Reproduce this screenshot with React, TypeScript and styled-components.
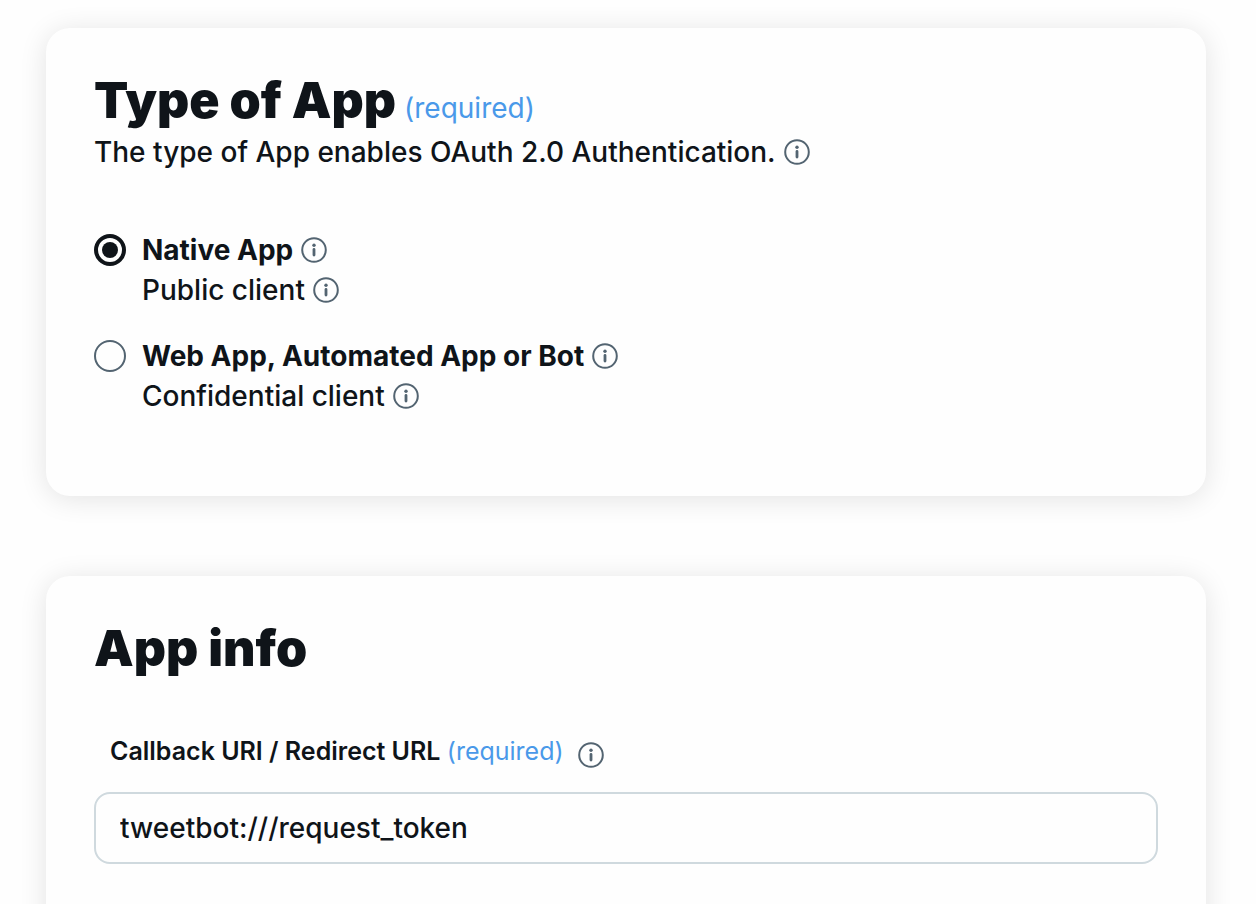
import React, { useState } from "react";
import styled, { createGlobalStyle } from "styled-components";

const ink = "#0f1419";
const slate = "#536471";
const blue = "#4a99e9";

const GlobalStyle = createGlobalStyle`
  *, *::before, *::after { box-sizing: border-box; }
  html { background: #fefefe; }
  body {
    margin: 0;
    color: ${ink};
    font-family: Inter, "Liberation Sans", sans-serif;
    font-size: 28px;
    font-weight: 500;
    line-height: 40px;
  }
`;

const Page = styled.main`
  display: flex;
  flex-direction: column;
  gap: 80px;
  padding: 28px 50px 48px 46px;
`;

const Card = styled.section`
  padding: 48px 48px 80px;
  border-radius: 24px;
  background: #fefefe;
  box-shadow: 0 3px 28px rgba(0, 0, 0, 0.11);
`;

const Title = styled.h1`
  margin: 0 0 8px;
  font-size: 50px;
  font-weight: 900;
  line-height: 48px;
`;

const Required = styled.span<{ $size: number }>`
  color: ${blue};
  font-size: ${(p) => p.$size}px;
  font-weight: 400;
  line-height: 24px;
`;

const Line = styled.div`
  display: flex;
  align-items: center;
  gap: 8px;
`;

const Options = styled.div`
  display: flex;
  flex-direction: column;
  gap: 26px;
  margin-top: 58px;
`;

const Option = styled.div`
  display: flex;
  align-items: flex-start;
  gap: 16px;
`;

const OptionName = styled.label`
  font-weight: 700;
`;

const Radio = styled.input`
  appearance: none;
  display: grid;
  place-content: center;
  flex: none;
  width: 32px;
  height: 32px;
  margin: 4px 0;
  border: 2px solid ${slate};
  border-radius: 50%;

  &:checked {
    border: 4px solid ${ink};
  }

  &:checked::after {
    content: "";
    width: 16px;
    height: 16px;
    border-radius: 50%;
    background: ${ink};
  }
`;

const IconButton = styled.button`
  display: flex;
  padding: 0;
  border: 0;
  background: none;
  color: ${slate};
  cursor: pointer;
`;

const FieldHead = styled.div`
  display: flex;
  align-items: flex-end;
  gap: 14px;
  margin: 62px 16px 24px;
`;

const FieldLabel = styled.label`
  font-size: 25px;
  font-weight: 600;
  line-height: 34px;
`;

const TextField = styled.input`
  display: block;
  width: 100%;
  height: 72px;
  padding: 0 24px;
  border: 2px solid #cfd9de;
  border-radius: 16px;
  background: transparent;
  color: ${ink};
  font: inherit;
`;

function Info({ label }: { label: string }) {
  return (
    <IconButton type="button" aria-label={label}>
      <svg width="26" height="26" viewBox="0 0 26 26" fill="none" aria-hidden="true">
        <circle cx="13" cy="13" r="11.8" stroke="currentColor" strokeWidth="2" />
        <circle cx="13" cy="8.3" r="1.7" fill="currentColor" />
        <path d="M13 12.4v5.6" stroke="currentColor" strokeWidth="2.8" strokeLinecap="round" />
      </svg>
    </IconButton>
  );
}

const appTypes = [
  { id: "native", name: "Native App", client: "Public client" },
  { id: "web", name: "Web App, Automated App or Bot", client: "Confidential client" },
];

export default function App() {
  const [type, setType] = useState("native");
  const [callback, setCallback] = useState("tweetbot:///request_token");

  return (
    <>
      <GlobalStyle />
      <Page>
        <Card>
          <Title>
            Type of App<Required $size={28}> (required)</Required>
          </Title>
          <Line>
            <span>The type of App enables OAuth 2.0 Authentication.</span>
            <Info label="About app types" />
          </Line>
          <Options role="radiogroup" aria-label="Type of App">
            {appTypes.map((t) => (
              <Option key={t.id}>
                <Radio
                  type="radio"
                  name="app-type"
                  id={t.id}
                  checked={type === t.id}
                  onChange={() => setType(t.id)}
                />
                <div>
                  <Line>
                    <OptionName htmlFor={t.id}>{t.name}</OptionName>
                    <Info label={`About ${t.name}`} />
                  </Line>
                  <Line>
                    <span>{t.client}</span>
                    <Info label={`About ${t.client}`} />
                  </Line>
                </div>
              </Option>
            ))}
          </Options>
        </Card>
        <Card>
          <Title as="h2">App info</Title>
          <FieldHead>
            <FieldLabel htmlFor="callback">
              Callback URI / Redirect URL <Required $size={25}>(required)</Required>
            </FieldLabel>
            <Info label="About callback URLs" />
          </FieldHead>
          <TextField
            id="callback"
            type="text"
            value={callback}
            onChange={(e) => setCallback(e.target.value)}
          />
        </Card>
      </Page>
    </>
  );
}
